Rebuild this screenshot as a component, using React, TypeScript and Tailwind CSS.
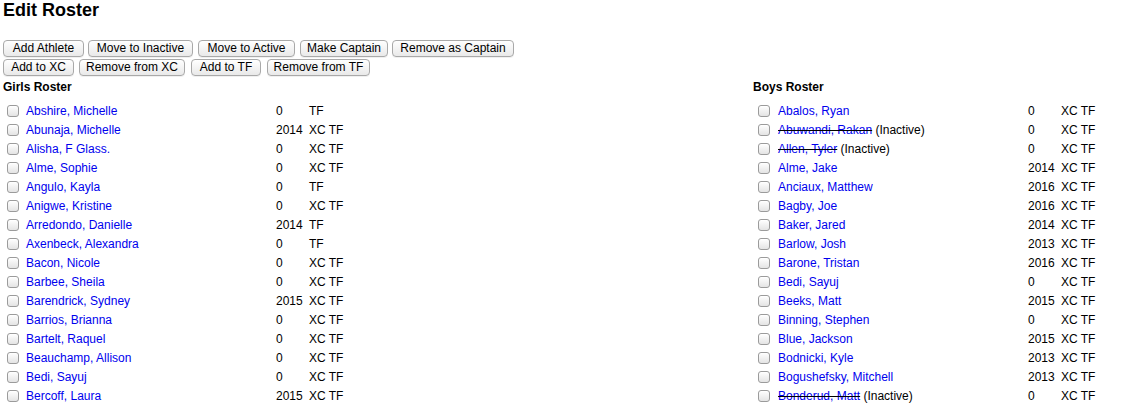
import React from 'react'

type Athlete = {
  name: string
  year: string
  teams: string
  inactive?: boolean
}

const girls: Athlete[] = [
  { name: 'Abshire, Michelle', year: '0', teams: 'TF' },
  { name: 'Abunaja, Michelle', year: '2014', teams: 'XC TF' },
  { name: 'Alisha, F Glass.', year: '0', teams: 'XC TF' },
  { name: 'Alme, Sophie', year: '0', teams: 'XC TF' },
  { name: 'Angulo, Kayla', year: '0', teams: 'TF' },
  { name: 'Anigwe, Kristine', year: '0', teams: 'XC TF' },
  { name: 'Arredondo, Danielle', year: '2014', teams: 'TF' },
  { name: 'Axenbeck, Alexandra', year: '0', teams: 'TF' },
  { name: 'Bacon, Nicole', year: '0', teams: 'XC TF' },
  { name: 'Barbee, Sheila', year: '0', teams: 'XC TF' },
  { name: 'Barendrick, Sydney', year: '2015', teams: 'XC TF' },
  { name: 'Barrios, Brianna', year: '0', teams: 'XC TF' },
  { name: 'Bartelt, Raquel', year: '0', teams: 'XC TF' },
  { name: 'Beauchamp, Allison', year: '0', teams: 'XC TF' },
  { name: 'Bedi, Sayuj', year: '0', teams: 'XC TF' },
  { name: 'Bercoff, Laura', year: '2015', teams: 'XC TF' },
]

const boys: Athlete[] = [
  { name: 'Abalos, Ryan', year: '0', teams: 'XC TF' },
  { name: 'Abuwandi, Rakan', year: '0', teams: 'XC TF', inactive: true },
  { name: 'Allen, Tyler', year: '0', teams: 'XC TF', inactive: true },
  { name: 'Alme, Jake', year: '2014', teams: 'XC TF' },
  { name: 'Anciaux, Matthew', year: '2016', teams: 'XC TF' },
  { name: 'Bagby, Joe', year: '2016', teams: 'XC TF' },
  { name: 'Baker, Jared', year: '2014', teams: 'XC TF' },
  { name: 'Barlow, Josh', year: '2013', teams: 'XC TF' },
  { name: 'Barone, Tristan', year: '2016', teams: 'XC TF' },
  { name: 'Bedi, Sayuj', year: '0', teams: 'XC TF' },
  { name: 'Beeks, Matt', year: '2015', teams: 'XC TF' },
  { name: 'Binning, Stephen', year: '0', teams: 'XC TF' },
  { name: 'Blue, Jackson', year: '2015', teams: 'XC TF' },
  { name: 'Bodnicki, Kyle', year: '2013', teams: 'XC TF' },
  { name: 'Bogushefsky, Mitchell', year: '2013', teams: 'XC TF' },
  { name: 'Bonderud, Matt', year: '0', teams: 'XC TF', inactive: true },
]

const topButtons = [
  { label: 'Add Athlete', cls: 'w-[81px]' },
  { label: 'Move to Inactive', cls: 'ml-[4px] w-[105px]' },
  { label: 'Move to Active', cls: 'ml-[5px] w-[97px]' },
  { label: 'Make Captain', cls: 'ml-[5px] w-[88px]' },
  { label: 'Remove as Captain', cls: 'ml-[4px] w-[122px]' },
]

const bottomButtons = [
  { label: 'Add to XC', cls: 'w-[71px]' },
  { label: 'Remove from XC', cls: 'ml-[5px] w-[106px]' },
  { label: 'Add to TF', cls: 'ml-[6px] w-[70px]' },
  { label: 'Remove from TF', cls: 'ml-[6px] w-[103px]' },
]

function RosterButton({ label, cls }: { label: string; cls: string }) {
  return (
    <button
      className={`${cls} h-[17px] whitespace-nowrap rounded-[4px] border border-[#a9a9a9] bg-gradient-to-b from-white to-[#e9e9e9] text-center text-[12px] leading-[15px] text-black shadow-[0_1px_0_rgba(0,0,0,0.06)]`}
    >
      {label}
    </button>
  )
}

function RosterRow({ athlete, right }: { athlete: Athlete; right?: boolean }) {
  const link = (
    <a href="#" className="text-[#0000ee]">
      {athlete.name}
    </a>
  )

  return (
    <div className="flex h-[19px] items-center">
      <div className={right ? 'w-[25px] pl-[5px]' : 'w-[23px] pl-[4px]'}>
        <input
          type="checkbox"
          className="block h-[12px] w-[12px] appearance-none rounded-[3px] border border-[#9b9b9b] bg-gradient-to-b from-white to-[#e4e4e4] shadow-[inset_0_1px_0_#fff]"
        />
      </div>
      <div className="w-[250px] whitespace-nowrap">
        {athlete.inactive ? (
          <>
            <span className="line-through decoration-black">{link}</span> (Inactive)
          </>
        ) : (
          link
        )}
      </div>
      <div className="w-[33px]">{athlete.year}</div>
      <div>{athlete.teams}</div>
    </div>
  )
}

function Roster({ title, athletes, right }: { title: string; athletes: Athlete[]; right?: boolean }) {
  return (
    <div>
      <h3 className="mb-[7px] text-[12px] font-bold leading-[14px]">{title}</h3>
      {athletes.map((a) => (
        <RosterRow key={a.name} athlete={a} right={right} />
      ))}
    </div>
  )
}

export default function App() {
  return (
    <div className="min-h-[407px] bg-white pl-[3px] text-[12px] text-black" style={{ fontFamily: '"Liberation Sans", Arial, sans-serif' }}>
      <h1 className="text-[18px] font-bold leading-[20px]">Edit Roster</h1>

      <div className="mt-[20px] flex flex-col gap-[2px]">
        <div className="flex">
          {topButtons.map((b) => (
            <RosterButton key={b.label} label={b.label} cls={b.cls} />
          ))}
        </div>
        <div className="flex">
          {bottomButtons.map((b) => (
            <RosterButton key={b.label} label={b.label} cls={b.cls} />
          ))}
        </div>
      </div>

      <div className="mt-[4px] flex">
        <div className="w-[750px]">
          <Roster title="Girls Roster" athletes={girls} />
        </div>
        <div>
          <Roster title="Boys Roster" athletes={boys} right />
        </div>
      </div>
    </div>
  )
}
